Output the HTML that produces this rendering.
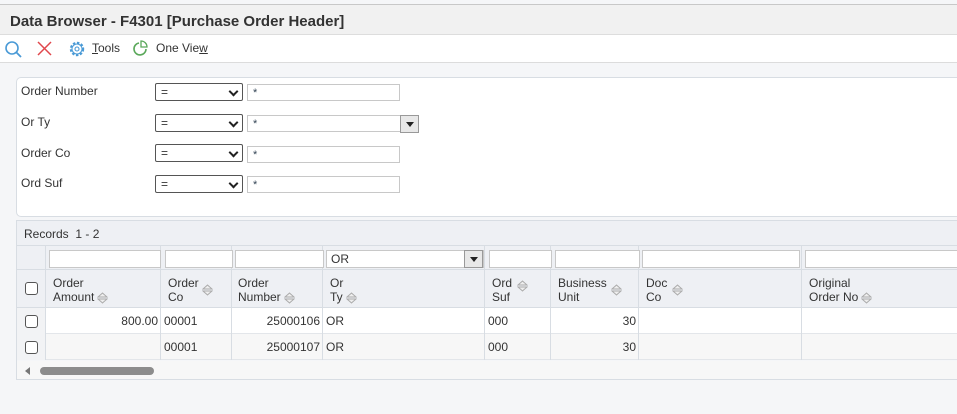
<!DOCTYPE html>
<html><head><style>
*{box-sizing:border-box;margin:0;padding:0}
body{width:957px;height:414px;overflow:hidden;background:#f5f6f8;font-family:"Liberation Sans",Arial,sans-serif;font-size:12px;color:#333;position:relative}
.a{position:absolute}
.title{left:0;top:4px;width:957px;height:31px;background:#f1f1f1;border-top:1px solid #c8c8c8;border-bottom:1px solid #ddd;font-weight:bold;font-size:15px;color:#333;padding:8px 0 0 10px}
.tb{left:0;top:35px;width:957px;height:28px;background:#fff;border-bottom:1px solid #dcdcdc}
.panel{left:16px;top:77px;width:950px;height:140px;background:#fff;border:1px solid #d8dde3;border-radius:5px}
.lbl{font-size:12px;color:#333}
.sel{width:88px;height:18px;border:1px solid #555;border-radius:2px;background:#fff;font-size:12px;padding:1px 0 0 5px}
.sel:after{content:"";position:absolute;right:5px;top:4px;width:5px;height:5px;border-right:2px solid #222;border-bottom:2px solid #222;transform:rotate(45deg)}
.inp{width:153px;height:17px;border:1px solid #c8c8c8;background:#fff;font-size:11px;padding:2px 0 0 5px;color:#345}
.grid{left:16px;top:220px;width:950px;height:160px;background:#f5f6f8;border:1px solid #d8dde3}
.hl{background:#d8dde3;width:1px}
.cb{width:13px;height:13px;border:1px solid #555;border-radius:3px;background:#fff}
.fi{height:18px;border:1px solid #c8c8c8;background:#fff}
.h{font-size:12px;line-height:14px;color:#333}
.s{display:inline-block;width:11px;height:12px;vertical-align:middle;margin-left:3px}
.c{font-size:12px;color:#333}
</style></head><body>
<div class="a title">Data Browser - F4301 [Purchase Order Header]</div>
<div class="a tb">
<svg class="a" style="left:4px;top:5px" width="18" height="18"><circle cx="8" cy="8" r="6" fill="none" stroke="#4a9ad6" stroke-width="1.6"/><line x1="12.5" y1="12.5" x2="17" y2="17" stroke="#4a9ad6" stroke-width="1.8"/></svg>
<svg class="a" style="left:37px;top:6px" width="15" height="15"><path d="M1 1L14 14M14 1L1 14" stroke="#e0474c" stroke-width="1.5"/></svg>
<svg class="a" style="left:68px;top:5px" width="18" height="18"><circle cx="9" cy="9" r="6" fill="none" stroke="#4a9ad6" stroke-width="2.4" stroke-dasharray="2.4 1.6"/><circle cx="9" cy="9" r="5" fill="#fff"/><circle cx="9" cy="9" r="5" fill="none" stroke="#4a9ad6" stroke-width="1"/><circle cx="9" cy="9" r="2" fill="none" stroke="#4a9ad6" stroke-width="1.1"/></svg>
<div class="a" style="left:92px;top:6px;font-size:12px"><u>T</u>ools</div>
<svg class="a" style="left:132px;top:5px" width="17" height="17"><path d="M7 3A6 6 0 1 0 14 9" fill="none" stroke="#5aa85a" stroke-width="1.6"/><path d="M9 1A6 6 0 0 1 15 7L9 7Z" fill="none" stroke="#5aa85a" stroke-width="1.3"/></svg>
<div class="a" style="left:156px;top:6px;font-size:12px">One Vie<u>w</u></div>
</div>
<div class="a panel"></div>
<div class="a lbl" style="left:21px;top:84px">Order Number</div>
<div class="a lbl" style="left:21px;top:115px">Or Ty</div>
<div class="a lbl" style="left:21px;top:146px">Order Co</div>
<div class="a lbl" style="left:21px;top:176px">Ord Suf</div>
<div class="a sel" style="left:155px;top:83px">=</div>
<div class="a sel" style="left:155px;top:114px">=</div>
<div class="a sel" style="left:155px;top:144px">=</div>
<div class="a sel" style="left:155px;top:175px">=</div>
<div class="a inp" style="left:247px;top:84px">*</div>
<div class="a inp" style="left:247px;top:115px;width:154px">*</div>
<div class="a" style="left:400px;top:115px;width:19px;height:18px;border:1px solid #999;background:#e8e8e8"><div class="a" style="left:5px;top:6px;border-left:4px solid transparent;border-right:4px solid transparent;border-top:5px solid #222"></div></div>
<div class="a inp" style="left:247px;top:146px">*</div>
<div class="a inp" style="left:247px;top:176px">*</div>

<div class="a grid"></div>
<div class="a" style="left:17px;top:221px;width:940px;height:25px;background:#eef0f4;border-bottom:1px solid #d8dde3"></div>
<div class="a" style="left:24px;top:227px;font-size:12px">Records&nbsp; 1 - 2</div>
<div class="a" style="left:17px;top:246px;width:940px;height:24px;background:#eef0f4;border-bottom:1px solid #d8dde3"></div>
<div class="a" style="left:17px;top:270px;width:940px;height:38px;background:#eef0f4;border-bottom:1px solid #d8dde3"></div>
<div class="a" style="left:45px;top:308px;width:912px;height:26px;background:#fff;border-bottom:1px solid #e3e6ea"></div>
<div class="a" style="left:45px;top:334px;width:912px;height:26px;background:#f7f7f7;border-bottom:1px solid #e3e6ea"></div>
<div class="a" style="left:17px;top:308px;width:28px;height:52px;background:#f2f3f5"></div>
<div class="a hl" style="left:45px;top:246px;height:114px"></div>
<div class="a hl" style="left:160px;top:246px;height:114px"></div>
<div class="a hl" style="left:231px;top:246px;height:114px"></div>
<div class="a hl" style="left:322px;top:246px;height:114px"></div>
<div class="a hl" style="left:484px;top:246px;height:114px"></div>
<div class="a hl" style="left:550px;top:246px;height:114px"></div>
<div class="a hl" style="left:638px;top:246px;height:114px"></div>
<div class="a hl" style="left:801px;top:246px;height:114px"></div>
<div class="a fi" style="left:49px;top:250px;width:112px"></div>
<div class="a fi" style="left:165px;top:250px;width:68px"></div>
<div class="a fi" style="left:235px;top:250px;width:89px"></div>
<div class="a fi" style="left:326px;top:250px;width:158px;font-size:12px;padding:1px 0 0 4px">OR</div>
<div class="a" style="left:464px;top:250px;width:19px;height:18px;border:1px solid #999;background:#e8e8e8"><div class="a" style="left:5px;top:6px;border-left:4px solid transparent;border-right:4px solid transparent;border-top:5px solid #222"></div></div>
<div class="a fi" style="left:489px;top:250px;width:63px"></div>
<div class="a fi" style="left:555px;top:250px;width:85px"></div>
<div class="a fi" style="left:642px;top:250px;width:158px"></div>
<div class="a fi" style="left:805px;top:250px;width:160px"></div>
<div class="a cb" style="left:25px;top:282px"></div>
<div class="a h" style="left:53px;top:276px">Order<br>Amount<svg class="s" viewBox="0 0 11 12"><path d="M1 5L5.5 1L10 5ZM1 7L5.5 11L10 7Z" fill="#eee" stroke="#aaa"/></svg></div>
<div class="a h" style="left:168px;top:276px">Order<br>Co</div><svg class="a" style="left:202px;top:284px" width="11" height="12"><path d="M1 5L5.5 1L10 5ZM1 7L5.5 11L10 7Z" fill="#eee" stroke="#aaa"/></svg>
<div class="a h" style="left:238px;top:276px">Order<br>Number<svg class="s" viewBox="0 0 11 12"><path d="M1 5L5.5 1L10 5ZM1 7L5.5 11L10 7Z" fill="#eee" stroke="#aaa"/></svg></div>
<div class="a h" style="left:330px;top:276px">Or<br>Ty<svg class="s" viewBox="0 0 11 12"><path d="M1 5L5.5 1L10 5ZM1 7L5.5 11L10 7Z" fill="#eee" stroke="#aaa"/></svg></div>
<div class="a h" style="left:492px;top:276px">Ord<br>Suf</div><svg class="a" style="left:517px;top:280px" width="11" height="12"><path d="M1 5L5.5 1L10 5ZM1 7L5.5 11L10 7Z" fill="#eee" stroke="#aaa"/></svg>
<div class="a h" style="left:558px;top:276px">Business<br>Unit</div><svg class="a" style="left:611px;top:284px" width="11" height="12"><path d="M1 5L5.5 1L10 5ZM1 7L5.5 11L10 7Z" fill="#eee" stroke="#aaa"/></svg>
<div class="a h" style="left:646px;top:276px">Doc<br>Co</div><svg class="a" style="left:672px;top:284px" width="11" height="12"><path d="M1 5L5.5 1L10 5ZM1 7L5.5 11L10 7Z" fill="#eee" stroke="#aaa"/></svg>
<div class="a h" style="left:809px;top:276px">Original<br>Order No<svg class="s" viewBox="0 0 11 12"><path d="M1 5L5.5 1L10 5ZM1 7L5.5 11L10 7Z" fill="#eee" stroke="#aaa"/></svg></div>
<div class="a cb" style="left:25px;top:315px"></div>
<div class="a cb" style="left:25px;top:341px"></div>
<div class="a c" style="left:45px;top:314px;width:113px;text-align:right">800.00</div>
<div class="a c" style="left:164px;top:314px">00001</div>
<div class="a c" style="left:231px;top:314px;width:89px;text-align:right">25000106</div>
<div class="a c" style="left:326px;top:314px">OR</div>
<div class="a c" style="left:488px;top:314px">000</div>
<div class="a c" style="left:550px;top:314px;width:86px;text-align:right">30</div>
<div class="a c" style="left:164px;top:340px">00001</div>
<div class="a c" style="left:231px;top:340px;width:89px;text-align:right">25000107</div>
<div class="a c" style="left:326px;top:340px">OR</div>
<div class="a c" style="left:488px;top:340px">000</div>
<div class="a c" style="left:550px;top:340px;width:86px;text-align:right">30</div>
<div class="a" style="left:17px;top:361px;width:940px;height:18px;background:#f7f7f7"></div>
<div class="a" style="left:25px;top:367px;border-top:4px solid transparent;border-bottom:4px solid transparent;border-right:5px solid #777"></div>
<div class="a" style="left:40px;top:367px;width:114px;height:8px;border-radius:4px;background:#8c8c8c"></div>
</body></html>
